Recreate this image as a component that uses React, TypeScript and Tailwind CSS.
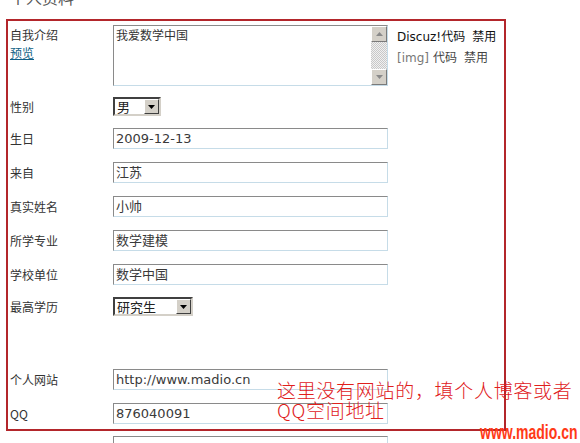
import React from "react";

const inputBorder =
  "border border-t-[#8a8a8a] border-l-[#8a8a8a] border-b-[#c6dce8] border-r-[#c6dce8]";

function Field({ value }: { value?: string }) {
  return (
    <div
      className={`w-[275px] h-[21px] flex items-center pl-[2px] bg-white text-[13px] text-[#3a3a3a] ${inputBorder}`}
      style={{ fontFamily: '"DejaVu Sans", "Noto Sans CJK SC", sans-serif' }}
    >
      {value}
    </div>
  );
}

function Select({ value, width }: { value: string; width: string }) {
  return (
    <div
      className={`${width} h-[19px] flex items-center justify-between border-2 border-t-[#404040] border-l-[#404040] border-b-[#d4d0c8] border-r-[#d4d0c8] bg-white`}
    >
      <span className="pl-[2px] text-[13px] leading-none text-[#222]">{value}</span>
      <div className="w-[15px] h-[15px] flex items-center justify-center bg-[#d4d0c8] border border-t-white border-l-white border-b-[#404040] border-r-[#404040]">
        <svg width="7" height="4" viewBox="0 0 7 4">
          <path d="M0 0h7L3.5 4z" fill="#000" />
        </svg>
      </div>
    </div>
  );
}

function ScrollButton({ up }: { up?: boolean }) {
  return (
    <div className="w-[16px] h-[16px] flex items-center justify-center bg-[#d4d0c8] border border-t-white border-l-white border-b-[#7a7a7a] border-r-[#7a7a7a]">
      <svg width="7" height="4" viewBox="0 0 7 4">
        <path d={up ? "M0 4h7L3.5 0z" : "M0 0h7L3.5 4z"} fill="#8a8a8a" />
      </svg>
    </div>
  );
}

function Row({
  label,
  children,
  className = "",
}: {
  label: string;
  children: React.ReactNode;
  className?: string;
}) {
  return (
    <div className={`flex items-center ${className}`}>
      <div className="w-[103px] text-[12px] text-[#333]">{label}</div>
      {children}
    </div>
  );
}

export default function App() {
  return (
    <div
      className="relative w-[580px] h-[443px] overflow-hidden bg-white pl-[10px]"
      style={{ fontFamily: '"Noto Sans CJK SC", "DejaVu Sans", sans-serif' }}
    >
      <div className="-mt-[13px] h-[20px] leading-[20px] text-[16px] text-[#555]">个人资料</div>

      <div className="mt-[18px] flex flex-col">
        {/* self intro */}
        <div className="flex">
          <div className="w-[103px] pt-[1px] text-[12px] leading-[18px] text-[#333]">
            <div>自我介绍</div>
            <a className="text-[#0f5f86] underline">预览</a>
          </div>
          <div className={`w-[275px] h-[61px] flex bg-white ${inputBorder}`}>
            <div className="flex-1 pl-[2px] pt-[1px] text-[12px] leading-[16px] text-[#333]">
              我爱数学中国
            </div>
            <div className="w-[16px] flex flex-col bg-[repeating-conic-gradient(#c8c8c8_0%_25%,#f0f0f0_0%_50%)] bg-[length:2px_2px]">
              <ScrollButton up />
              <div className="flex-1" />
              <ScrollButton />
            </div>
          </div>
          <div className="pl-[9px] pt-[1px] text-[12px] leading-[19px]">
            <div className="text-[#111]">
              <span style={{ fontFamily: '"DejaVu Sans", sans-serif' }}>Discuz!</span>代码
              <span className="ml-[7px]">禁用</span>
            </div>
            <div className="text-[#444]">
              <span className="text-[#777]" style={{ fontFamily: '"DejaVu Sans", sans-serif' }}>
                [img]
              </span>
              <span className="ml-[4px]">代码</span>
              <span className="ml-[7px]">禁用</span>
            </div>
          </div>
        </div>

        <Row label="性别" className="mt-[11px]">
          <Select value="男" width="w-[48px]" />
        </Row>
        <Row label="生日" className="mt-[12px]">
          <Field value="2009-12-13" />
        </Row>
        <Row label="来自" className="mt-[13px]">
          <Field value="江苏" />
        </Row>
        <Row label="真实姓名" className="mt-[13px]">
          <Field value="小帅" />
        </Row>
        <Row label="所学专业" className="mt-[13px]">
          <Field value="数学建模" />
        </Row>
        <Row label="学校单位" className="mt-[13px]">
          <Field value="数学中国" />
        </Row>
        <Row label="最高学历" className="mt-[12px]">
          <Select value="研究生" width="w-[80px]" />
        </Row>
        <Row label="个人网站" className="mt-[53px]">
          <Field value="http://www.madio.cn" />
        </Row>
        <Row label="QQ" className="mt-[13px]">
          <Field value="876040091" />
        </Row>
        <Row label="" className="mt-[12px]">
          <Field />
        </Row>
      </div>

      {/* annotation overlay */}
      <div className="absolute left-[6px] top-[19px] w-[500px] h-[412px] border-2 border-[#b3262b]" />
      <div className="absolute left-[277px] top-[380px] text-[19px] leading-[20px] font-light text-[#e0201c] tracking-[0.7px]">
        <div>这里没有网站的，填个人博客或者</div>
        <div>QQ空间地址</div>
      </div>
      <div
        className="absolute left-[480px] top-[421px] text-[20px] leading-[22px] font-bold text-[#ff3a17] scale-x-[0.7] origin-left"
        style={{ fontFamily: '"Liberation Sans", sans-serif' }}
      >
        www.madio.cn
      </div>
    </div>
  );
}
